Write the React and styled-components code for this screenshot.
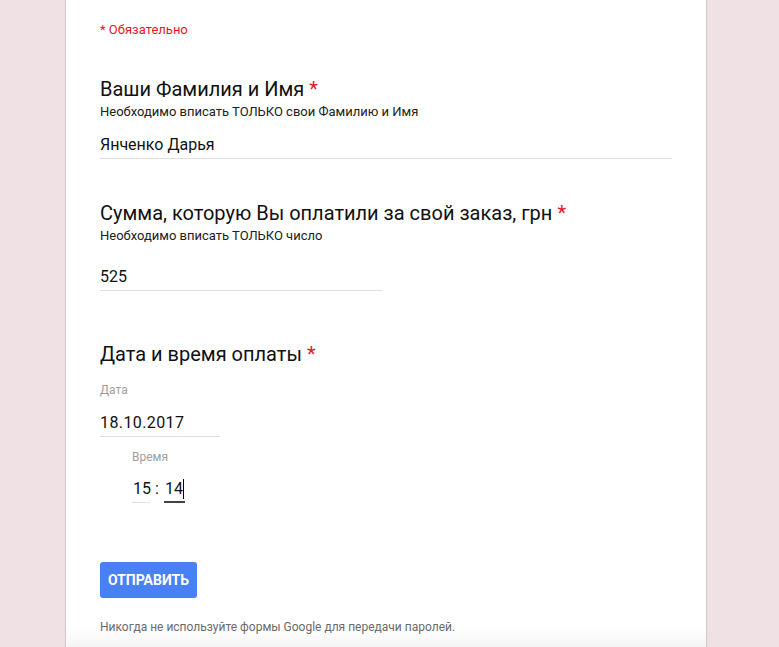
import React from "react";
import styled, { createGlobalStyle } from "styled-components";

const Global = createGlobalStyle`
  html, body { margin: 0; padding: 0; overflow: hidden; }
  body {
    background: #efe1e4;
    font-family: Roboto, "Noto Sans", Arial, sans-serif;
    -webkit-font-smoothing: antialiased;
  }
`;

const Page = styled.div`
  min-height: 100vh;
  display: flex;
  padding-left: 66px;
`;

const Card = styled.div`
  width: 640px;
  background: #fff;
  box-shadow: 0 0 2px rgba(0, 0, 0, 0.25), 0 0 1px rgba(0, 0, 0, 0.12);
  padding: 22px 34px 0;
  box-sizing: border-box;
  display: flex;
  flex-direction: column;
  min-height: 100vh;
`;

const Required = styled.div`
  font-size: 13px;
  line-height: 16px;
  color: #e4172b;
`;

const Question = styled.section`
  margin-top: ${(p) => p.$top}px;
  display: flex;
  flex-direction: column;
`;

const Title = styled.div`
  font-size: 20px;
  line-height: 24px;
  color: #111;
`;

const Star = styled.span`
  color: #e4172b;
  margin-left: 5px;
`;

const Help = styled.div`
  margin-top: 3px;
  font-size: 13px;
  line-height: 16px;
  color: #212121;
`;

const Field = styled.div`
  margin-top: ${(p) => p.$top}px;
  margin-left: ${(p) => p.$left || 0}px;
  width: ${(p) => p.$width}px;
  font-size: 16px;
  line-height: 24px;
  color: #111;
  letter-spacing: ${(p) => p.$spacing || 0}px;
  border-bottom: 1px solid #e0e0e0;
  padding-bottom: 1px;
`;

const Label = styled.div`
  margin-top: ${(p) => p.$top}px;
  margin-left: ${(p) => p.$left || 0}px;
  font-size: 12px;
  line-height: 16px;
  color: #9e9e9e;
`;

const TimeRow = styled.div`
  margin-top: 12px;
  margin-left: 32px;
  display: flex;
  align-items: flex-end;
  font-size: 16px;
  line-height: 24px;
  color: #111;
`;

const TimePart = styled.div`
  width: ${(p) => p.$width}px;
  box-sizing: border-box;
  padding-left: 1px;
  border-bottom: ${(p) => (p.$active ? "2px solid #424242" : "1px solid #e0e0e0")};
  padding-bottom: ${(p) => (p.$active ? 0 : 1)}px;
  display: flex;
  align-items: center;
  white-space: nowrap;
  overflow: visible;
`;

const Colon = styled.div`
  width: 14px;
  text-align: center;
  padding-bottom: 2px;
`;

const Caret = styled.span`
  flex-shrink: 0;
  display: block;
  width: 1px;
  height: 20px;
  background: #000;
`;

const SubmitRow = styled.div`
  margin-top: 59px;
  display: flex;
`;

const Submit = styled.button`
  height: 36px;
  width: 97px;
  border: none;
  border-radius: 3px;
  background: #4a80f5;
  color: #fff;
  font-family: Roboto, Arial, sans-serif;
  font-weight: 700;
  font-size: 14px;
  letter-spacing: 0;
  text-transform: uppercase;
  padding: 0;
  cursor: pointer;
`;

const Footer = styled.div`
  margin: 20px -34px 0;
  padding: 1px 34px 40px;
  flex: 1;
  background: linear-gradient(#fff 0px, #fff 10px, #f4f4f4 30px);
`;

const Notice = styled.div`
  font-size: 12px;
  line-height: 16px;
  color: #6b6b6b;
`;

export default function App() {
  return (
    <>
      <Global />
      <Page>
        <Card>
          <Required>* Обязательно</Required>

          <Question $top={39}>
            <Title>
              Ваши Фамилия и Имя<Star>*</Star>
            </Title>
            <Help>Необходимо вписать ТОЛЬКО свои Фамилию и Имя</Help>
            <Field $top={13} $width={572}>Янченко Дарья</Field>
          </Question>

          <Question $top={42}>
            <Title>
              Сумма, которую Вы оплатили за свой заказ, грн<Star>*</Star>
            </Title>
            <Help>Необходимо вписать ТОЛЬКО число</Help>
            <Field $top={21} $width={282}>525</Field>
          </Question>

          <Question $top={51}>
            <Title>
              Дата и время оплаты<Star>*</Star>
            </Title>
            <Label $top={16}>Дата</Label>
            <Field $top={13} $width={120} $spacing={0.4}>18.10.2017</Field>
            <Label $top={12} $left={32}>Время</Label>
            <TimeRow>
              <TimePart $width={18}>15</TimePart>
              <Colon>:</Colon>
              <TimePart $width={21} $active>
                <span>14</span>
                <Caret />
              </TimePart>
            </TimeRow>
          </Question>

          <SubmitRow>
            <Submit>Отправить</Submit>
          </SubmitRow>

          <Footer>
            <Notice>Никогда не используйте формы Google для передачи паролей.</Notice>
          </Footer>
        </Card>
      </Page>
    </>
  );
}
